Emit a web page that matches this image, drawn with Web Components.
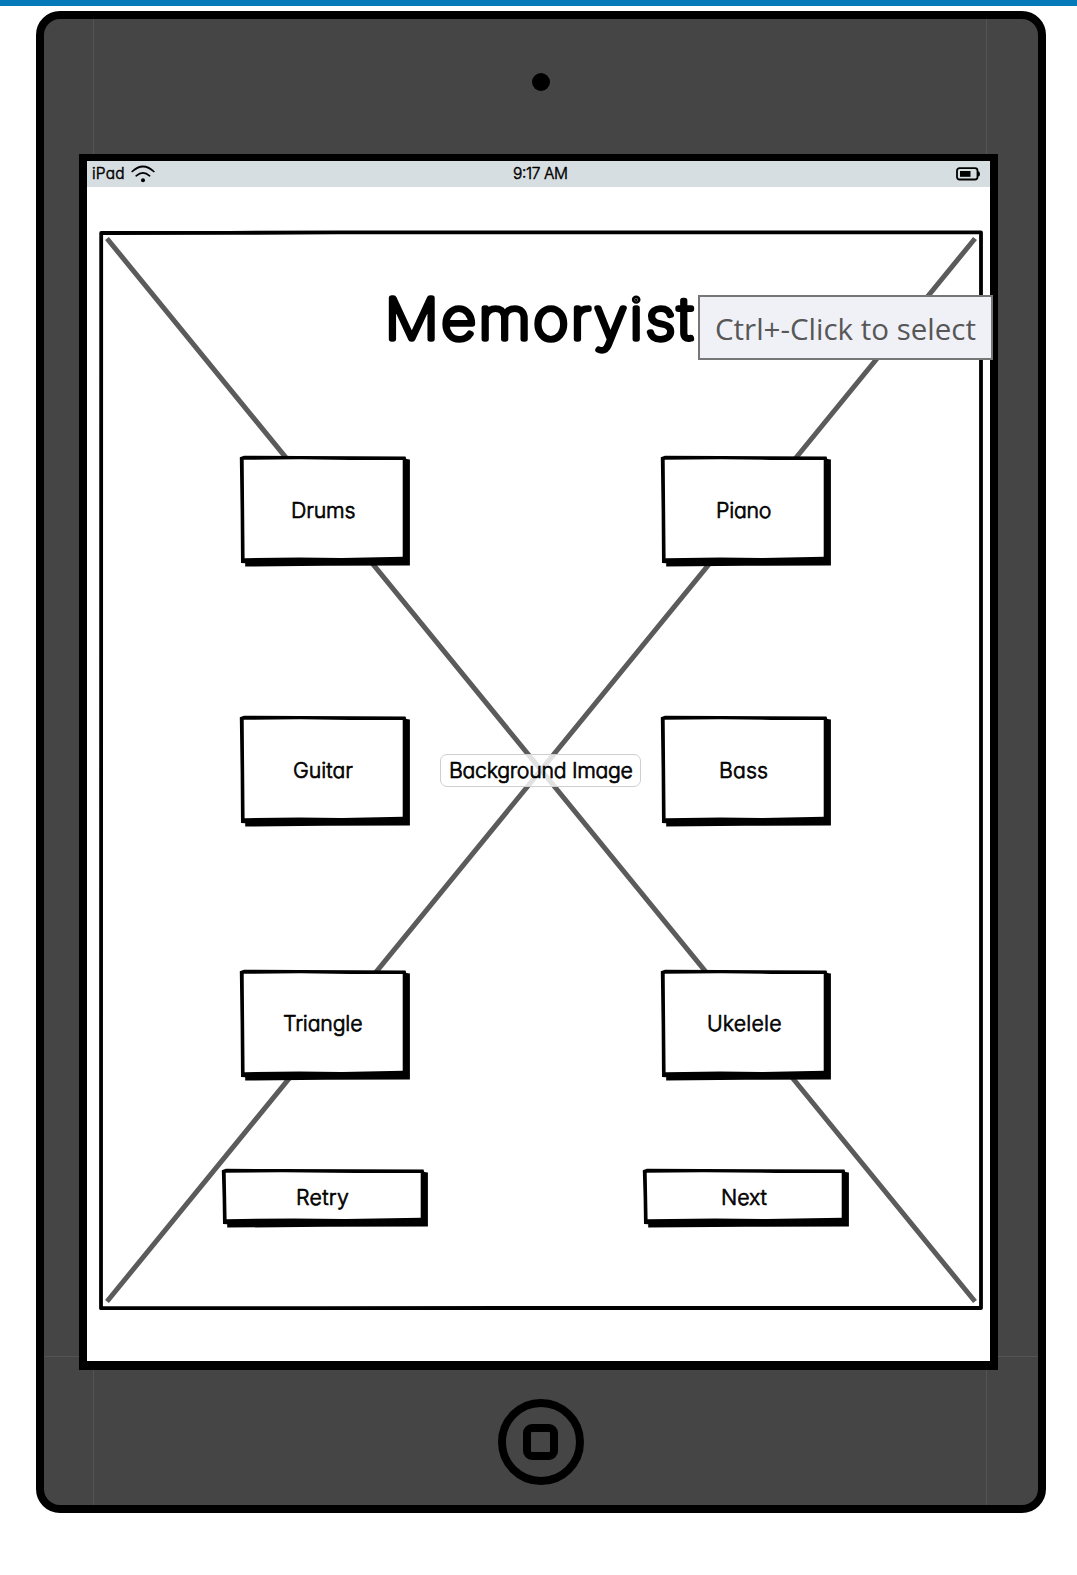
<!DOCTYPE html>
<html lang="en">
<head>
<meta charset="utf-8">
<title>Memoryist</title>
<style>
html,body{margin:0;background:#fff;font-family:Inter,"Liberation Sans",sans-serif}
body{width:1077px;height:1575px;overflow:hidden}
</style>
</head>
<body>
<memory-app></memory-app>
<script>
/* Handwriting-style label: rounded strokes, single-storey a, adjusted glyph width and spacing. */
class HandText extends HTMLElement{
  connectedCallback(){
    const g=(n,d)=>this.getAttribute(n)||d;
    const size=+g('size',22), w=+g('width',60), s=g('stroke','0.7'), wt=g('weight','300'), k=+g('squeeze',.97);
    const h=Math.round(size*1.2), b=g('base',size*0.98);
    const r=this.attachShadow({mode:'open'});
    r.innerHTML=`<style>:host{display:block;flex:none;width:${w}px;height:${h}px}
      svg{display:block;overflow:visible}
      text{font-family:Inter,"Liberation Sans",sans-serif;font-size:${size}px;font-weight:${wt};font-feature-settings:"cv11","ss03";fill:#000;stroke:#000;stroke-width:${s};stroke-linejoin:round;stroke-linecap:round}</style>
      <svg width="${w}" height="${h}"><text transform="scale(${k} 1)" x="0" y="${b}" textLength="${w/k}" lengthAdjust="spacing"></text></svg>`;
    r.querySelector('text').textContent=g('text','');
  }
}
customElements.define('hand-text',HandText);

/* Sketched button with a hard drop shadow. */
class SketchButton extends HTMLElement{
  connectedCallback(){
    const w=+this.getAttribute('w'), h=+this.getAttribute('h');
    const r=this.attachShadow({mode:'open'});
    r.innerHTML=`<style>:host{display:grid;flex:none;width:${w}px;height:${h}px}
      svg,div{grid-area:1/1}
      svg{display:block;overflow:visible}
      div{display:flex;align-items:center;justify-content:center;padding:0 4px 5px 0}</style>
      <svg width="${w}" height="${h}">
        <path d="M-.2 1.2 4 -.2 60 0 ${w-4} .6 ${w-3.2} 3 ${w+.4} 3.4V${h-.5}L${w/2} ${h-.2} 5.2 ${h+.6} 5.2 ${h-2.8} 1 ${h-3} .6 ${h/2}Z"/>
        <path fill="#fff" d="M3.7 3.8 60 3.2 ${w*.65} 3.9 ${w-6.8} 4V${h-9.2}L${w*.6} ${h-8} ${w*.35} ${h-8.6} 4.6 ${h-7.8}Z"/>
      </svg><div><slot></slot></div>`;
  }
}
customElements.define('sketch-button',SketchButton);

class StatusBar extends HTMLElement{
  connectedCallback(){
    this.attachShadow({mode:'open'}).innerHTML=`<style>
      :host{display:grid;grid-template-columns:1fr auto 1fr;align-items:center;height:26px;box-sizing:border-box;padding:0 10px 0 5px;background:#d7dee1}
      .l{display:flex;gap:6.5px;align-items:center}.r{display:flex;justify-content:flex-end}
      hand-text{margin-top:-3px}svg{display:block}.m{margin-left:8px}</style>
      <div class="l"><hand-text text="iPad" size="16" width="32.5" stroke=".5"></hand-text>
      <svg width="24" height="18" viewBox="0 0 24 18" fill="none" stroke="#000" stroke-width="1.7" stroke-linecap="round"><path d="M1.2 6.5Q12-3.5 22.8 6.5M5.2 10.8Q12 5 18.6 10.8"/><circle cx="12" cy="15.3" r="2" fill="#000" stroke="none"/></svg></div>
      <hand-text class="m" text="9:17 AM" size="16" width="55" stroke=".5"></hand-text>
      <div class="r"><svg width="24" height="14" viewBox="0 0 24 14"><rect x="1" y="1.2" width="20.5" height="11.3" rx="2.5" fill="none" stroke="#000" stroke-width="1.8"/><rect x="4" y="4" width="10.5" height="5.8"/><path d="M22 4.2Q24 4.4 24 7T22 9.5Z"/></svg></div>`;
  }
}
customElements.define('status-bar',StatusBar);

class ImageStage extends HTMLElement{
  connectedCallback(){
    this.attachShadow({mode:'open'}).innerHTML=`<style>
      :host{display:grid;width:884px;height:1080px}
      .bg,.content{grid-area:1/1}.bg{display:block}</style>
      <svg class="bg" width="884" height="1080" fill="none">
        <path d="M8 8.5 876 1071.5M876 8.5 8 1071.5" stroke="#5b5b5c" stroke-width="5"/>
        <path d="M2.2 3 130 2.9 240 2.3 882 2.4V1078H420L220 1078.2H2Z" stroke="#000" stroke-width="3.8" stroke-linejoin="round"/>
      </svg><div class="content"><slot></slot></div>`;
  }
}
customElements.define('image-stage',ImageStage);

class ImageCaption extends HTMLElement{
  connectedCallback(){
    this.attachShadow({mode:'open'}).innerHTML=`<style>
      :host{display:flex;flex:none;box-sizing:border-box;width:201px;height:33.5px;border:1.5px solid #cfcfcf;border-radius:7px;background:rgba(255,255,255,.82);align-items:center;justify-content:center;padding:0 0 2.5px 1px}</style><slot></slot>`;
  }
}
customElements.define('image-caption',ImageCaption);

class HintTip extends HTMLElement{
  connectedCallback(){
    this.attachShadow({mode:'open'}).innerHTML=`<style>
      :host{position:absolute;left:698px;top:295px;box-sizing:border-box;width:295px;height:65px;border:2px solid #767676;background:#f0f1f7;padding:0 0 0 15px}
      svg{display:block;overflow:visible}text{font:29px "Open Sans","Noto Sans",sans-serif;fill:#575757}</style>
      <svg width="261" height="61"><text x="0" y="43" textLength="261" lengthAdjust="spacingAndGlyphs">Ctrl+-Click to select</text></svg>`;
  }
}
customElements.define('hint-tip',HintTip);

class TabletDevice extends HTMLElement{
  connectedCallback(){
    this.attachShadow({mode:'open'}).innerHTML=`<style>
      :host{display:flex;flex-direction:column;align-items:center;box-sizing:border-box;width:1010px;height:1502px;border:8px solid #000;border-radius:24px;
        background:linear-gradient(#545454,#545454) 49px 0/1px 100% no-repeat,linear-gradient(#545454,#545454) 942px 0/1px 100% no-repeat,linear-gradient(#545454,#545454) 0 1337px/100% 1px no-repeat,#454545}
      .camera{display:block;width:18px;height:18px;border-radius:50%;background:#000;margin-top:54px}
      .screen{box-sizing:border-box;width:919px;height:1216px;margin:63px 5px 0 0;border:8px solid #000;border-top-width:7px;border-bottom-width:9px;background:#fff}
      .home{box-sizing:border-box;width:86px;height:86px;border:8px solid #000;border-radius:50%;margin-top:29px;display:flex;align-items:center;justify-content:center}
      .home i{box-sizing:border-box;width:35px;height:36px;border:8px solid #000;border-radius:9px;margin-right:1px}
      </style><span class="camera"></span><div class="screen"><slot></slot></div><div class="home"><i></i></div>`;
  }
}
customElements.define('tablet-device',TabletDevice);

class MemoryApp extends HTMLElement{
  connectedCallback(){
    this.attachShadow({mode:'open'}).innerHTML=`<style>
      :host{display:block}
      .bar{height:6px;background:#067ab8}
      tablet-device{margin:5px 0 0 36px}
      image-stage{margin:43px 0 0 12px}
      .title{height:226px;box-sizing:border-box;padding:51px 0 0 286px}
      .row{display:flex;align-items:flex-start;padding-left:141px;gap:251.5px;height:260.3px}
      .mid{height:253.4px;gap:0}
      .mid image-caption{margin:37.5px 20.5px 0 30px}
      .last{height:199.6px}
      .actions{padding-left:123px;gap:215.5px;height:60px}</style>
      <div class="bar"></div>
      <tablet-device>
        <status-bar></status-bar>
        <image-stage>
          <div class="title"><hand-text text="Memoryist" size="56.5" width="307.5" base="58.3" weight="100" stroke="5.6" squeeze="1.06"></hand-text></div>
          <div class="row"><sketch-button w="169.5" h="110"><hand-text text="Drums" width="64.5"></hand-text></sketch-button><sketch-button w="169.5" h="110"><hand-text text="Piano" width="55.5"></hand-text></sketch-button></div>
          <div class="row mid"><sketch-button w="169.5" h="110"><hand-text text="Guitar" width="60"></hand-text></sketch-button><image-caption><hand-text text="Background Image" width="184"></hand-text></image-caption><sketch-button w="169.5" h="110"><hand-text text="Bass" width="49"></hand-text></sketch-button></div>
          <div class="row last"><sketch-button w="169.5" h="110"><hand-text text="Triangle" width="79.5"></hand-text></sketch-button><sketch-button w="169.5" h="110"><hand-text text="Ukelele" width="74.5"></hand-text></sketch-button></div>
          <div class="row actions"><sketch-button w="205.5" h="58"><hand-text text="Retry" width="53"></hand-text></sketch-button><sketch-button w="205.5" h="58"><hand-text text="Next" width="46"></hand-text></sketch-button></div>
        </image-stage>
      </tablet-device>
      <hint-tip></hint-tip>`;
  }
}
customElements.define('memory-app',MemoryApp);
</script>
</body>
</html>
